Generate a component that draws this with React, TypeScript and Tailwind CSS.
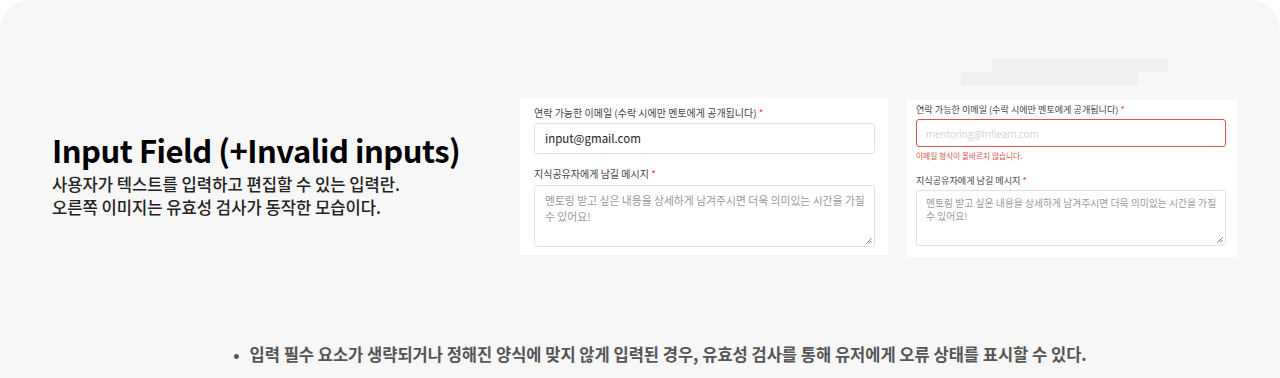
import React from 'react';

const font = { fontFamily: '"Noto Sans CJK KR", "Noto Sans", sans-serif' };

const Grip = () => (
  <svg className="absolute right-[2px] bottom-[2px]" width="7" height="7" viewBox="0 0 7 7">
    <path d="M6.5 1.5 L1.5 6.5 M6.5 4 L4 6.5" stroke="#777" strokeWidth="1" />
  </svg>
);

const Star = () => <span className="text-[#e0443a]"> *</span>;

const ValidPanel: React.FC = () => (
  <div className="w-[368px] h-[157px] bg-white pl-[14px] pr-[13px] pt-[7px]">
    <p className="text-[10px] leading-[16px] text-[#444]">
      연락 가능한 이메일 (수락 시에만 멘토에게 공개됩니다)
      <Star />
    </p>
    <div className="mt-[2px] h-[31px] rounded-[3px] border border-[#e3e3e3] pl-[10px] flex items-center text-[11.5px] text-[#222]">
      input@gmail.com
    </div>
    <p className="mt-[12px] text-[10px] leading-[16px] text-[#444]">
      지식공유자에게 남길 메시지
      <Star />
    </p>
    <div className="relative mt-[3px] h-[62px] rounded-[3px] border border-[#e3e3e3] pl-[10px] pt-[6px] text-[10.8px] leading-[16px] text-[#9a9a9a] whitespace-nowrap">
      멘토링 받고 싶은 내용을 상세하게 남겨주시면 더욱 의미있는 시간을 가질
      <br />수 있어요!
      <Grip />
    </div>
  </div>
);

const InvalidPanel: React.FC = () => (
  <div className="w-[330px] h-[157px] bg-white pl-[9px] pr-[11px] pt-[2px]">
    <p className="text-[9.1px] leading-[14px] text-[#444]">
      연락 가능한 이메일 (수락 시에만 멘토에게 공개됩니다)
      <Star />
    </p>
    <div className="mt-[3px] h-[28px] rounded-[3px] border border-[#d4574d] pl-[9px] flex items-center text-[10px] font-light text-[#c4c4c4]">
      mentoring@inflearn.com
    </div>
    <p className="mt-[3px] text-[7.7px] leading-[12px] text-[#d4574d]">이메일 형식이 올바르지 않습니다.</p>
    <p className="mt-[11px] text-[9.1px] leading-[14px] text-[#444]">
      지식공유자에게 남길 메시지
      <Star />
    </p>
    <div className="relative mt-[3px] h-[56px] rounded-[3px] border border-[#e3e3e3] pl-[9px] pt-[6px] text-[9.8px] leading-[13px] text-[#9a9a9a] whitespace-nowrap">
      멘토링 받고 싶은 내용을 상세하게 남겨주시면 더욱 의미있는 시간을 가질
      <br />수 있어요!
      <Grip />
    </div>
  </div>
);

export default function App() {
  return (
    <div className="bg-white w-[1280px] h-[378px]" style={font}>
      <div className="h-full rounded-t-[30px] bg-[#f7f7f7] flex flex-col">
        <div className="flex flex-1">
          <div className="w-[520px] pl-[52px] pt-[127px]">
            <h1 className="text-[31px] leading-[45px] font-bold text-black tracking-[-0.5px]">
              Input Field (+Invalid inputs)
            </h1>
            <p className="mt-[1px] text-[16.6px] leading-[23px] font-medium text-[#222]">
              사용자가 텍스트를 입력하고 편집할 수 있는 입력란.
              <br />
              오른쪽 이미지는 유효성 검사가 동작한 모습이다.
            </p>
          </div>
          <div className="pt-[98px]">
            <ValidPanel />
          </div>
          <div className="ml-[19px] pt-[58px] flex flex-col">
            <div className="ml-[85px] w-[176px] h-[14px] bg-[#eff0f2]" />
            <div className="ml-[54px] w-[177px] h-[14px] bg-[#eff0f2]" />
            <div className="mt-[14px]">
              <InvalidPanel />
            </div>
          </div>
        </div>
        <div className="h-[35px] flex justify-center pl-[40px]">
          <p className="text-[16.5px] leading-[22px] font-bold text-[#555]">
            <span className="mr-[10px]">•</span>
            입력 필수 요소가 생략되거나 정해진 양식에 맞지 않게 입력된 경우, 유효성 검사를 통해 유저에게 오류 상태를 표시할 수 있다.
          </p>
        </div>
      </div>
    </div>
  );
}
